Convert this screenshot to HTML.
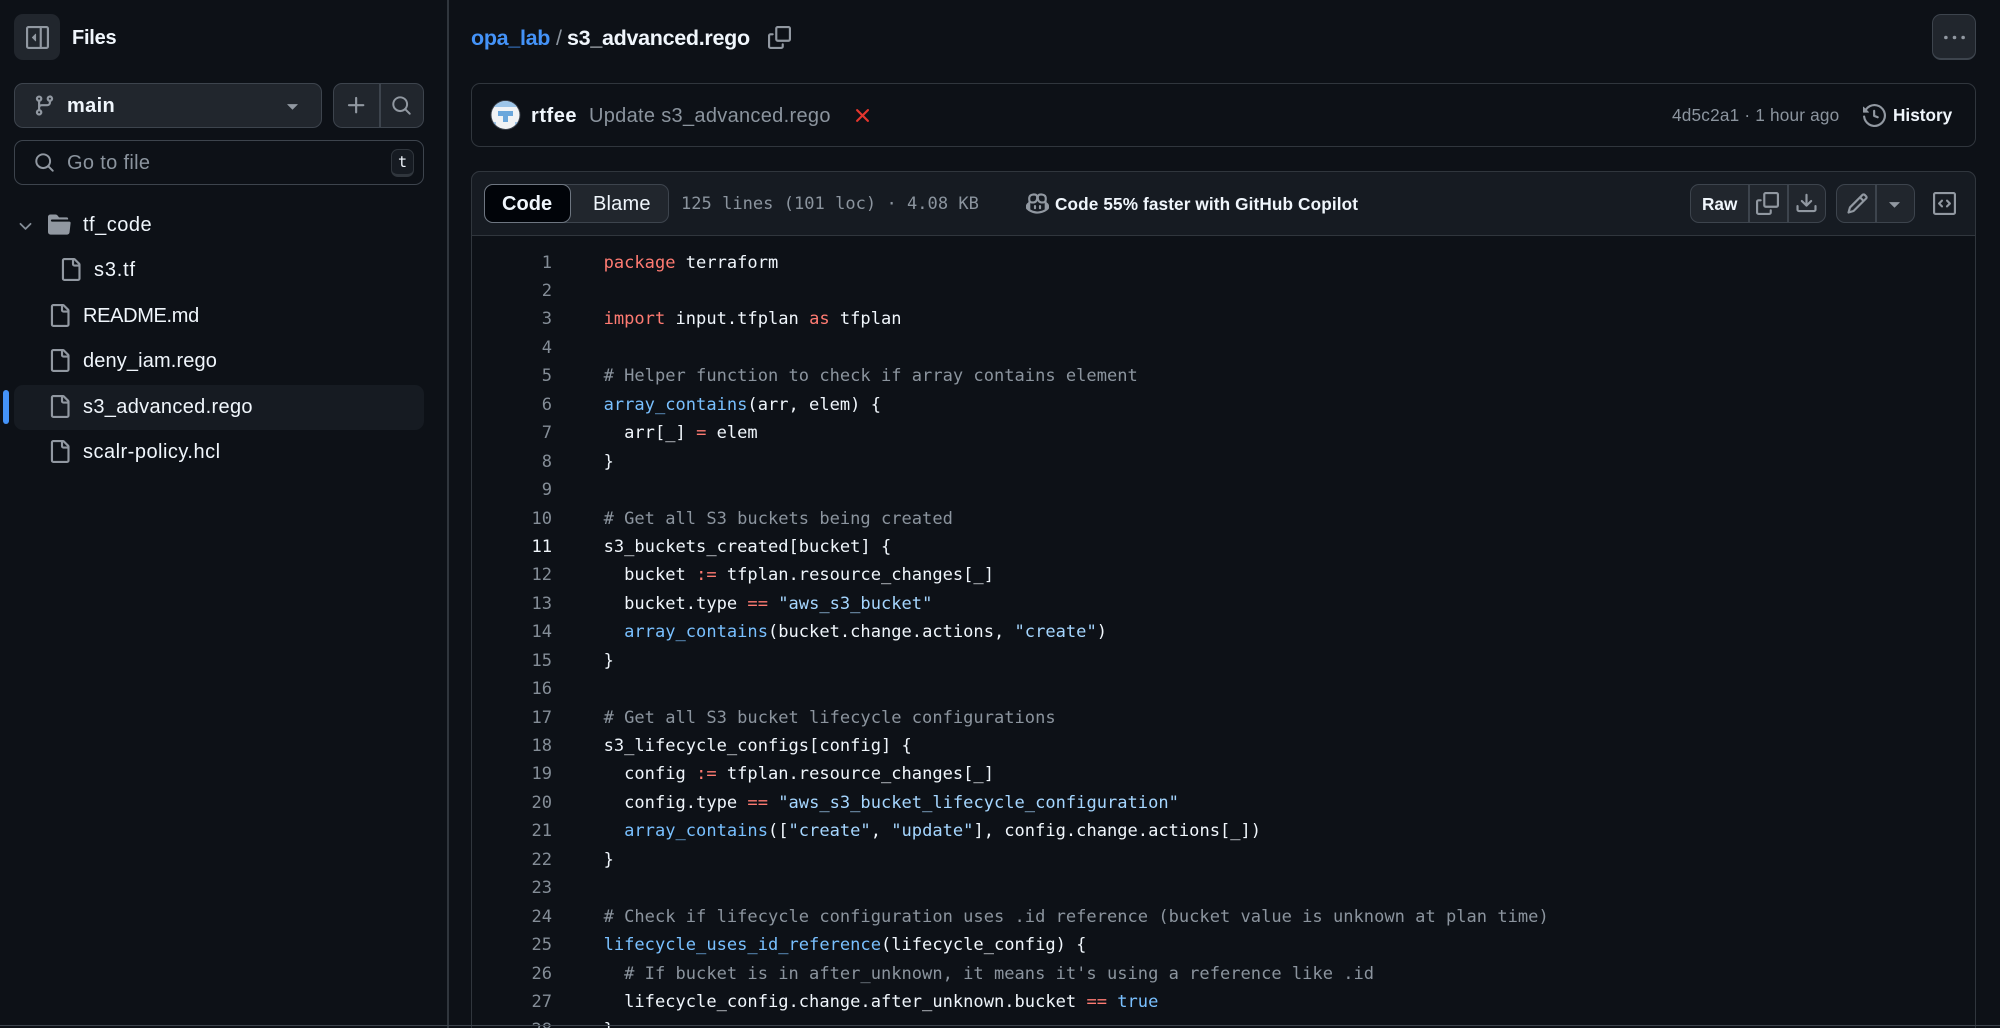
<!DOCTYPE html>
<html><head><meta charset="utf-8"><title>s3_advanced.rego</title>
<style>
html,body{margin:0;padding:0;width:2000px;height:1028px;overflow:hidden;background:#0d1117;color:#f0f6fc;font-family:"Liberation Sans",sans-serif}
#page{position:relative;width:2000px;height:1028px;overflow:hidden;background:#0d1117}
.t{position:absolute;white-space:pre;line-height:30px;font-size:20px;letter-spacing:.33px}
.b{font-weight:700}
.box{position:absolute;box-sizing:border-box}
.btn{background:#21262d;border:1.5px solid #3d444d;border-radius:9px}
svg{position:absolute;display:block}
.ic{fill:#9198a1}
.m{font-family:"DejaVu Sans Mono","Liberation Mono",monospace;font-size:17.06px;letter-spacing:.01px}
#nums{position:absolute;left:500px;top:248.6px;width:52px;text-align:right;line-height:28.44px;color:#848d97;white-space:pre;margin:0}
#code{position:absolute;left:603.6px;top:248.6px;line-height:28.44px;color:#f0f6fc;white-space:pre;margin:0}
.k{color:#ff7b72}.f{color:#79c0ff}.s{color:#a5d6ff}.c{color:#8b949e}
</style></head><body><div id="page">

<!-- sidebar -->
<div class="box" style="left:447px;top:0;width:1.5px;height:1028px;background:#30363d"></div>
<div class="box" style="left:14px;top:14px;width:46px;height:46px;background:#21262d;border-radius:9px"></div>
<svg class="ic" style="left:26px;top:26px" width="23" height="23" viewBox="0 0 16 16"><path d="m4.177 7.823 2.396-2.396A.25.25 0 0 1 7 5.604v4.792a.25.25 0 0 1-.427.177L4.177 8.177a.25.25 0 0 1 0-.354Z"/><path d="M0 1.75C0 .784.784 0 1.75 0h12.5C15.216 0 16 .784 16 1.75v12.5A1.75 1.75 0 0 1 14.25 16H1.75A1.75 1.75 0 0 1 0 14.25Zm1.75-.25a.25.25 0 0 0-.25.25v12.5c0 .138.112.25.25.25H9.5v-13Zm12.5 13a.25.25 0 0 0 .25-.25V1.75a.25.25 0 0 0-.25-.25H11v13Z"/></svg>
<div class="t b" style="left:72px;top:23px;letter-spacing:-.25px">Files</div>

<div class="box btn" style="left:14px;top:83px;width:308px;height:45px"></div>
<svg class="ic" style="left:33px;top:94px" width="23" height="23" viewBox="0 0 16 16"><path d="M9.5 3.25a2.25 2.25 0 1 1 3 2.122V6A2.5 2.5 0 0 1 10 8.5H6a1 1 0 0 0-1 1v1.128a2.251 2.251 0 1 1-1.5 0V5.372a2.25 2.25 0 1 1 1.5 0v1.836A2.493 2.493 0 0 1 6 7h4a1 1 0 0 0 1-1v-.628A2.25 2.25 0 0 1 9.5 3.25Zm-6 0a.75.75 0 1 0 1.5 0 .75.75 0 0 0-1.5 0Zm8.25-.75a.75.75 0 1 0 0 1.5.75.75 0 0 0 0-1.5ZM4.25 12a.75.75 0 1 0 0 1.5.75.75 0 0 0 0-1.5Z"/></svg>
<div class="t b" style="left:67px;top:91px">main</div>
<svg class="ic" style="left:281px;top:94px" width="23" height="23" viewBox="0 0 16 16"><path d="m4.427 7.427 3.396 3.396a.25.25 0 0 0 .354 0l3.396-3.396A.25.25 0 0 0 11.396 7H4.604a.25.25 0 0 0-.177.427Z"/></svg>

<div class="box btn" style="left:333px;top:83px;width:91px;height:45px"></div>
<div class="box" style="left:379px;top:84px;width:1.5px;height:43px;background:#3d444d"></div>
<svg class="ic" style="left:345px;top:94px" width="23" height="23" viewBox="0 0 16 16"><path d="M7.75 2a.75.75 0 0 1 .75.75V7h4.25a.75.75 0 0 1 0 1.5H8.5v4.25a.75.75 0 0 1-1.5 0V8.5H2.75a.75.75 0 0 1 0-1.5H7V2.75A.75.75 0 0 1 7.75 2Z"/></svg>
<svg class="ic" style="left:391px;top:95px" width="21" height="21" viewBox="0 0 16 16"><path d="M10.68 11.74a6 6 0 0 1-7.922-8.982 6 6 0 0 1 8.982 7.922l3.04 3.04a.749.749 0 0 1-.326 1.275.749.749 0 0 1-.734-.215ZM11.5 7a4.499 4.499 0 1 0-8.997 0A4.499 4.499 0 0 0 11.5 7Z"/></svg>

<div class="box" style="left:14px;top:140px;width:410px;height:45px;border:1.5px solid #3d444d;border-radius:9px;background:#0d1117"></div>
<svg class="ic" style="left:34px;top:152px" width="21" height="21" viewBox="0 0 16 16"><path d="M10.68 11.74a6 6 0 0 1-7.922-8.982 6 6 0 0 1 8.982 7.922l3.04 3.04a.749.749 0 0 1-.326 1.275.749.749 0 0 1-.734-.215ZM11.5 7a4.499 4.499 0 1 0-8.997 0A4.499 4.499 0 0 0 11.5 7Z"/></svg>
<div class="t" style="left:67px;top:148px;color:#8b949e">Go to file</div>
<div class="box" style="left:391px;top:149px;width:23px;height:28px;border:1.5px solid #30363d;border-bottom-width:3px;border-radius:7px;background:#161b22"></div>
<div class="t m" style="left:398px;top:147px;font-size:15px">t</div>

<svg style="left:16px;top:217px" width="19" height="19" viewBox="0 0 16 16"><path fill="#848d97" d="M12.78 5.22a.749.749 0 0 1 0 1.06l-4.25 4.25a.749.749 0 0 1-1.06 0L3.22 6.28a.749.749 0 1 1 1.06-1.06L8 8.939l3.72-3.719a.749.749 0 0 1 1.06 0Z"/></svg>
<svg class="ic" style="left:48px;top:213px" width="23" height="23" viewBox="0 0 16 16"><path d="M.513 1.513A1.75 1.75 0 0 1 1.75 1h3.5c.55 0 1.07.26 1.4.7l.9 1.2a.25.25 0 0 0 .2.1H13a1 1 0 0 1 1 1v.5H2.75a.75.75 0 0 0 0 1.5h11.978a1 1 0 0 1 .994 1.117L15 13.25A1.75 1.75 0 0 1 13.25 15H1.75A1.75 1.75 0 0 1 0 13.25V2.75c0-.464.184-.91.513-1.237Z"/></svg>
<div class="t" style="left:83px;top:210px;letter-spacing:.5px">tf_code</div>

<svg class="ic" style="left:59px;top:258px" width="23" height="23" viewBox="0 0 16 16"><path d="M2 1.75C2 .784 2.784 0 3.75 0h6.586c.464 0 .909.184 1.237.513l2.914 2.914c.329.328.513.773.513 1.237v9.586A1.75 1.75 0 0 1 13.25 16h-9.5A1.75 1.75 0 0 1 2 14.25Zm1.75-.25a.25.25 0 0 0-.25.25v12.5c0 .138.112.25.25.25h9.5a.25.25 0 0 0 .25-.25V6h-2.75A1.75 1.75 0 0 1 9 4.25V1.5Zm6.75.062V4.25c0 .138.112.25.25.25h2.688l-.011-.013-2.914-2.914-.013-.011Z"/></svg>
<div class="t" style="left:94px;top:255px;letter-spacing:.83px">s3.tf</div>

<svg class="ic" style="left:48px;top:304px" width="23" height="23" viewBox="0 0 16 16"><path d="M2 1.75C2 .784 2.784 0 3.75 0h6.586c.464 0 .909.184 1.237.513l2.914 2.914c.329.328.513.773.513 1.237v9.586A1.75 1.75 0 0 1 13.25 16h-9.5A1.75 1.75 0 0 1 2 14.25Zm1.75-.25a.25.25 0 0 0-.25.25v12.5c0 .138.112.25.25.25h9.5a.25.25 0 0 0 .25-.25V6h-2.75A1.75 1.75 0 0 1 9 4.25V1.5Zm6.75.062V4.25c0 .138.112.25.25.25h2.688l-.011-.013-2.914-2.914-.013-.011Z"/></svg>
<div class="t" style="left:83px;top:301px;letter-spacing:-.34px">README.md</div>

<svg class="ic" style="left:48px;top:349px" width="23" height="23" viewBox="0 0 16 16"><path d="M2 1.75C2 .784 2.784 0 3.75 0h6.586c.464 0 .909.184 1.237.513l2.914 2.914c.329.328.513.773.513 1.237v9.586A1.75 1.75 0 0 1 13.25 16h-9.5A1.75 1.75 0 0 1 2 14.25Zm1.75-.25a.25.25 0 0 0-.25.25v12.5c0 .138.112.25.25.25h9.5a.25.25 0 0 0 .25-.25V6h-2.75A1.75 1.75 0 0 1 9 4.25V1.5Zm6.75.062V4.25c0 .138.112.25.25.25h2.688l-.011-.013-2.914-2.914-.013-.011Z"/></svg>
<div class="t" style="left:83px;top:346px;letter-spacing:.13px">deny_iam.rego</div>

<div class="box" style="left:14px;top:385px;width:410px;height:45px;background:#161b22;border-radius:9px"></div>
<div class="box" style="left:3px;top:390px;width:6px;height:34px;background:#4493f8;border-radius:3px"></div>
<svg class="ic" style="left:48px;top:395px" width="23" height="23" viewBox="0 0 16 16"><path d="M2 1.75C2 .784 2.784 0 3.75 0h6.586c.464 0 .909.184 1.237.513l2.914 2.914c.329.328.513.773.513 1.237v9.586A1.75 1.75 0 0 1 13.25 16h-9.5A1.75 1.75 0 0 1 2 14.25Zm1.75-.25a.25.25 0 0 0-.25.25v12.5c0 .138.112.25.25.25h9.5a.25.25 0 0 0 .25-.25V6h-2.75A1.75 1.75 0 0 1 9 4.25V1.5Zm6.75.062V4.25c0 .138.112.25.25.25h2.688l-.011-.013-2.914-2.914-.013-.011Z"/></svg>
<div class="t" style="left:83px;top:392px">s3_advanced.rego</div>

<svg class="ic" style="left:48px;top:440px" width="23" height="23" viewBox="0 0 16 16"><path d="M2 1.75C2 .784 2.784 0 3.75 0h6.586c.464 0 .909.184 1.237.513l2.914 2.914c.329.328.513.773.513 1.237v9.586A1.75 1.75 0 0 1 13.25 16h-9.5A1.75 1.75 0 0 1 2 14.25Zm1.75-.25a.25.25 0 0 0-.25.25v12.5c0 .138.112.25.25.25h9.5a.25.25 0 0 0 .25-.25V6h-2.75A1.75 1.75 0 0 1 9 4.25V1.5Zm6.75.062V4.25c0 .138.112.25.25.25h2.688l-.011-.013-2.914-2.914-.013-.011Z"/></svg>
<div class="t" style="left:83px;top:437px;letter-spacing:.49px">scalr-policy.hcl</div>

<!-- breadcrumb -->
<div class="t b" style="left:471px;top:23px;font-size:21.5px;letter-spacing:-.3px;color:#4493f8">opa_lab</div>
<div class="t" style="left:556px;top:23px;font-size:21.5px;color:#8b949e">/</div>
<div class="t b" style="left:567px;top:23px;font-size:21.5px;letter-spacing:-.3px">s3_advanced.rego</div>
<svg class="ic" style="left:768px;top:26px" width="23" height="23" viewBox="0 0 16 16"><path d="M0 6.75C0 5.784.784 5 1.75 5h1.5a.75.75 0 0 1 0 1.5h-1.5a.25.25 0 0 0-.25.25v7.5c0 .138.112.25.25.25h7.5a.25.25 0 0 0 .25-.25v-1.5a.75.75 0 0 1 1.5 0v1.5A1.75 1.75 0 0 1 9.25 16h-7.5A1.75 1.75 0 0 1 0 14.25Z"/><path d="M5 1.75C5 .784 5.784 0 6.75 0h7.5C15.216 0 16 .784 16 1.75v7.5A1.75 1.75 0 0 1 14.25 11h-7.5A1.75 1.75 0 0 1 5 9.25Zm1.75-.25a.25.25 0 0 0-.25.25v7.5c0 .138.112.25.25.25h7.5a.25.25 0 0 0 .25-.25v-7.5a.25.25 0 0 0-.25-.25Z"/></svg>

<div class="box btn" style="left:1932px;top:14px;width:44px;height:46px;border-bottom-width:2.5px"></div>
<svg class="ic" style="left:1943px;top:26px" width="23" height="23" viewBox="0 0 16 16"><circle cx="8" cy="8" r="1.25"/><circle cx="2" cy="8" r="1.25"/><circle cx="14" cy="8" r="1.25"/></svg>

<!-- commit box -->
<div class="box" style="left:471px;top:83px;width:1505px;height:64px;border:1.5px solid #30363d;border-radius:9px"></div>
<svg style="left:490px;top:100px" width="31" height="30" viewBox="0 0 31 30"><defs><clipPath id="av"><circle cx="15.5" cy="15" r="14"/></clipPath></defs><circle cx="15.5" cy="15" r="15" fill="#39404a"/><g clip-path="url(#av)"><rect width="31" height="30" fill="#f1f3f5"/><rect y="0" width="31" height="7" fill="#9dc5e8"/><rect x="1" y="22" width="5" height="8" fill="#9dc5e8"/><rect x="25" y="22" width="5" height="8" fill="#9dc5e8"/><path d="M8 11h15v5h-5v6h-5v-6H8z" fill="#6aa7dc"/></g></svg>
<div class="t b" style="left:531px;top:101px;letter-spacing:.55px">rtfee</div>
<div class="t" style="left:589px;top:101px;color:#8b949e;letter-spacing:.31px">Update s3_advanced.rego</div>
<svg style="left:851px;top:104px" width="23" height="23" viewBox="0 0 16 16" fill="#e5362e"><path d="M3.72 3.72a.75.75 0 0 1 1.06 0L8 6.94l3.22-3.22a.749.749 0 0 1 1.275.326.749.749 0 0 1-.215.734L9.06 8l3.22 3.22a.749.749 0 0 1-.326 1.275.749.749 0 0 1-.734-.215L8 9.06l-3.22 3.22a.751.751 0 0 1-1.042-.018.751.751 0 0 1-.018-1.042L6.94 8 3.72 4.78a.75.75 0 0 1 0-1.06Z"/></svg>
<div class="t" style="left:1672px;top:100px;font-size:17.2px;color:#8b949e;letter-spacing:.2px">4d5c2a1 · 1 hour ago</div>
<svg class="ic" style="left:1863px;top:104px" width="23" height="23" viewBox="0 0 16 16"><path d="m.427 1.927 1.215 1.215a8.002 8.002 0 1 1-1.6 5.685.75.75 0 1 1 1.493-.154 6.5 6.5 0 1 0 1.18-4.458l1.358 1.358A.25.25 0 0 1 3.896 6H.25A.25.25 0 0 1 0 5.75V2.104a.25.25 0 0 1 .427-.177ZM7.75 4a.75.75 0 0 1 .75.75v2.992l2.028.812a.75.75 0 0 1-.557 1.392l-2.5-1A.751.751 0 0 1 7 8.25v-3.5A.75.75 0 0 1 7.75 4Z"/></svg>
<div class="t b" style="left:1893px;top:100px;font-size:17.2px;letter-spacing:0">History</div>

<!-- file box -->
<div class="box" style="left:471px;top:171px;width:1505px;height:900px;border:1.5px solid #30363d;border-radius:9px"></div>
<div class="box" style="left:471px;top:171px;width:1505px;height:65px;background:#161b22;border:1.5px solid #30363d;border-radius:9px 9px 0 0"></div>

<div class="box" style="left:484px;top:184px;width:185px;height:39px;background:#21262d;border:1.5px solid #3d444d;border-radius:9px"></div>
<div class="box" style="left:484px;top:184px;width:87px;height:39px;background:#010409;border:1.5px solid #6e7681;border-radius:9px"></div>
<div class="t b" style="left:502px;top:189px;letter-spacing:.05px">Code</div>
<div class="t" style="left:593px;top:189px;letter-spacing:.2px">Blame</div>
<div class="t m" style="left:681px;top:188.5px;color:#8b949e">125 lines (101 loc) · 4.08 KB</div>
<svg class="ic" style="left:1026px;top:192px" width="23" height="23" viewBox="0 0 16 16"><path d="M7.998 15.035c-4.562 0-7.873-2.914-7.998-3.749V9.338c.085-.628.677-1.686 1.588-2.065.013-.07.024-.143.036-.218.029-.183.06-.384.126-.612-.201-.508-.254-1.084-.254-1.656 0-.87.128-1.769.693-2.484.579-.733 1.494-1.124 2.724-1.261 1.206-.134 2.262.034 2.944.765.05.053.096.108.139.165.044-.057.094-.112.143-.165.682-.731 1.738-.899 2.944-.765 1.23.137 2.145.528 2.724 1.261.566.715.693 1.614.693 2.484 0 .572-.053 1.148-.254 1.656.066.228.098.429.126.612.012.076.024.148.037.218.924.385 1.522 1.471 1.591 2.095v1.872c0 .766-3.351 3.795-8.002 3.795Zm0-1.485c2.28 0 4.584-1.11 5.002-1.433V7.862l-.023-.116c-.49.21-1.075.291-1.727.291-1.146 0-2.059-.327-2.71-.991A3.222 3.222 0 0 1 8 6.303a3.24 3.24 0 0 1-.544.743c-.65.664-1.563.991-2.71.991-.652 0-1.236-.081-1.727-.291l-.023.116v4.255c.419.323 2.722 1.433 5.002 1.433ZM6.762 2.83c-.193-.206-.637-.413-1.682-.297-1.019.113-1.479.404-1.713.7-.247.312-.369.789-.369 1.554 0 .793.129 1.171.308 1.371.162.181.519.379 1.442.379.853 0 1.339-.235 1.638-.54.315-.322.527-.827.617-1.553.117-.935-.037-1.395-.241-1.614Zm4.155-.297c-1.044-.116-1.488.091-1.681.297-.204.219-.359.679-.242 1.614.091.726.303 1.231.618 1.553.299.305.784.54 1.638.54.922 0 1.28-.198 1.442-.379.179-.2.308-.578.308-1.371 0-.765-.123-1.242-.37-1.554-.233-.296-.693-.587-1.713-.7Z"/><path d="M6.25 9.037a.75.75 0 0 1 .75.75v1.501a.75.75 0 0 1-1.5 0V9.787a.75.75 0 0 1 .75-.75Zm4.25.75v1.501a.75.75 0 0 1-1.5 0V9.787a.75.75 0 0 1 1.5 0Z"/></svg>
<div class="t b" style="left:1055px;top:189px;font-size:17.2px;letter-spacing:.12px">Code 55% faster with GitHub Copilot</div>

<div class="box btn" style="left:1690px;top:184px;width:136px;height:39px"></div>
<div class="box" style="left:1748px;top:185px;width:1.5px;height:37px;background:#3d444d"></div>
<div class="box" style="left:1787px;top:185px;width:1.5px;height:37px;background:#3d444d"></div>
<div class="t b" style="left:1702px;top:189px;font-size:17.2px;letter-spacing:0">Raw</div>
<svg class="ic" style="left:1756px;top:192px" width="23" height="23" viewBox="0 0 16 16"><path d="M0 6.75C0 5.784.784 5 1.75 5h1.5a.75.75 0 0 1 0 1.5h-1.5a.25.25 0 0 0-.25.25v7.5c0 .138.112.25.25.25h7.5a.25.25 0 0 0 .25-.25v-1.5a.75.75 0 0 1 1.5 0v1.5A1.75 1.75 0 0 1 9.25 16h-7.5A1.75 1.75 0 0 1 0 14.25Z"/><path d="M5 1.75C5 .784 5.784 0 6.75 0h7.5C15.216 0 16 .784 16 1.75v7.5A1.75 1.75 0 0 1 14.25 11h-7.5A1.75 1.75 0 0 1 5 9.25Zm1.75-.25a.25.25 0 0 0-.25.25v7.5c0 .138.112.25.25.25h7.5a.25.25 0 0 0 .25-.25v-7.5a.25.25 0 0 0-.25-.25Z"/></svg>
<svg class="ic" style="left:1795px;top:192px" width="23" height="23" viewBox="0 0 16 16"><path d="M2.75 14A1.75 1.75 0 0 1 1 12.25v-2.5a.75.75 0 0 1 1.5 0v2.5c0 .138.112.25.25.25h10.5a.25.25 0 0 0 .25-.25v-2.5a.75.75 0 0 1 1.5 0v2.5A1.75 1.75 0 0 1 13.25 14Z"/><path d="M7.25 7.689V2a.75.75 0 0 1 1.5 0v5.689l1.97-1.969a.749.749 0 1 1 1.06 1.06l-3.25 3.25a.749.749 0 0 1-1.06 0L4.22 6.78a.749.749 0 1 1 1.06-1.06l1.97 1.969Z"/></svg>

<div class="box btn" style="left:1836px;top:184px;width:79px;height:39px"></div>
<div class="box" style="left:1875px;top:185px;width:1.5px;height:37px;background:#3d444d"></div>
<svg class="ic" style="left:1846px;top:192px" width="23" height="23" viewBox="0 0 16 16"><path d="M11.013 1.427a1.75 1.75 0 0 1 2.474 0l1.086 1.086a1.75 1.75 0 0 1 0 2.474l-8.61 8.61c-.21.21-.47.364-.756.445l-3.251.93a.75.75 0 0 1-.927-.928l.929-3.25c.081-.286.235-.547.445-.758l8.61-8.61Zm.176 4.823L9.75 4.81l-6.286 6.287a.253.253 0 0 0-.064.108l-.558 1.953 1.953-.558a.253.253 0 0 0 .108-.064Zm1.238-3.763a.25.25 0 0 0-.354 0L10.811 3.75l1.439 1.44 1.263-1.263a.25.25 0 0 0 0-.354Z"/></svg>
<svg class="ic" style="left:1883px;top:192px" width="23" height="23" viewBox="0 0 16 16"><path d="m4.427 7.427 3.396 3.396a.25.25 0 0 0 .354 0l3.396-3.396A.25.25 0 0 0 11.396 7H4.604a.25.25 0 0 0-.177.427Z"/></svg>
<svg class="ic" style="left:1933px;top:192px" width="23" height="23" viewBox="0 0 16 16"><path d="M0 1.75C0 .784.784 0 1.75 0h12.5C15.216 0 16 .784 16 1.75v12.5A1.75 1.75 0 0 1 14.25 16H1.75A1.75 1.75 0 0 1 0 14.25Zm1.75-.25a.25.25 0 0 0-.25.25v12.5c0 .138.112.25.25.25h12.5a.25.25 0 0 0 .25-.25V1.75a.25.25 0 0 0-.25-.25Zm7.47 3.97a.75.75 0 0 1 1.06 0l2 2a.75.75 0 0 1 0 1.06l-2 2a.749.749 0 0 1-1.275-.326.749.749 0 0 1 .215-.734L10.69 8 9.22 6.53a.75.75 0 0 1 0-1.06ZM6.78 6.53 5.31 8l1.47 1.47a.749.749 0 0 1-.326 1.275.749.749 0 0 1-.734-.215l-2-2a.75.75 0 0 1 0-1.06l2-2a.751.751 0 0 1 1.042.018.751.751 0 0 1 .018 1.042Z"/></svg>

<!-- code -->
<pre id="nums" class="m">1
2
3
4
5
6
7
8
9
10
<span style="color:#f0f6fc">11</span>
12
13
14
15
16
17
18
19
20
21
22
23
24
25
26
27
28</pre>
<pre id="code" class="m"><span class="k">package</span> terraform

<span class="k">import</span> input.tfplan <span class="k">as</span> tfplan

<span class="c"># Helper function to check if array contains element</span>
<span class="f">array_contains</span>(arr, elem) {
  arr[_] <span class="k">=</span> elem
}

<span class="c"># Get all S3 buckets being created</span>
s3_buckets_created[bucket] {
  bucket <span class="k">:=</span> tfplan.resource_changes[_]
  bucket.type <span class="k">==</span> <span class="s">"aws_s3_bucket"</span>
  <span class="f">array_contains</span>(bucket.change.actions, <span class="s">"create"</span>)
}

<span class="c"># Get all S3 bucket lifecycle configurations</span>
s3_lifecycle_configs[config] {
  config <span class="k">:=</span> tfplan.resource_changes[_]
  config.type <span class="k">==</span> <span class="s">"aws_s3_bucket_lifecycle_configuration"</span>
  <span class="f">array_contains</span>([<span class="s">"create"</span>, <span class="s">"update"</span>], config.change.actions[_])
}

<span class="c"># Check if lifecycle configuration uses .id reference (bucket value is unknown at plan time)</span>
<span class="f">lifecycle_uses_id_reference</span>(lifecycle_config) {
  <span class="c"># If bucket is in after_unknown, it means it's using a reference like .id</span>
  lifecycle_config.change.after_unknown.bucket <span class="k">==</span> <span class="f">true</span>
}</pre>

<div class="box" style="left:0;top:1025px;width:2000px;height:1px;background:#3d444d"></div>
</div></body></html>
